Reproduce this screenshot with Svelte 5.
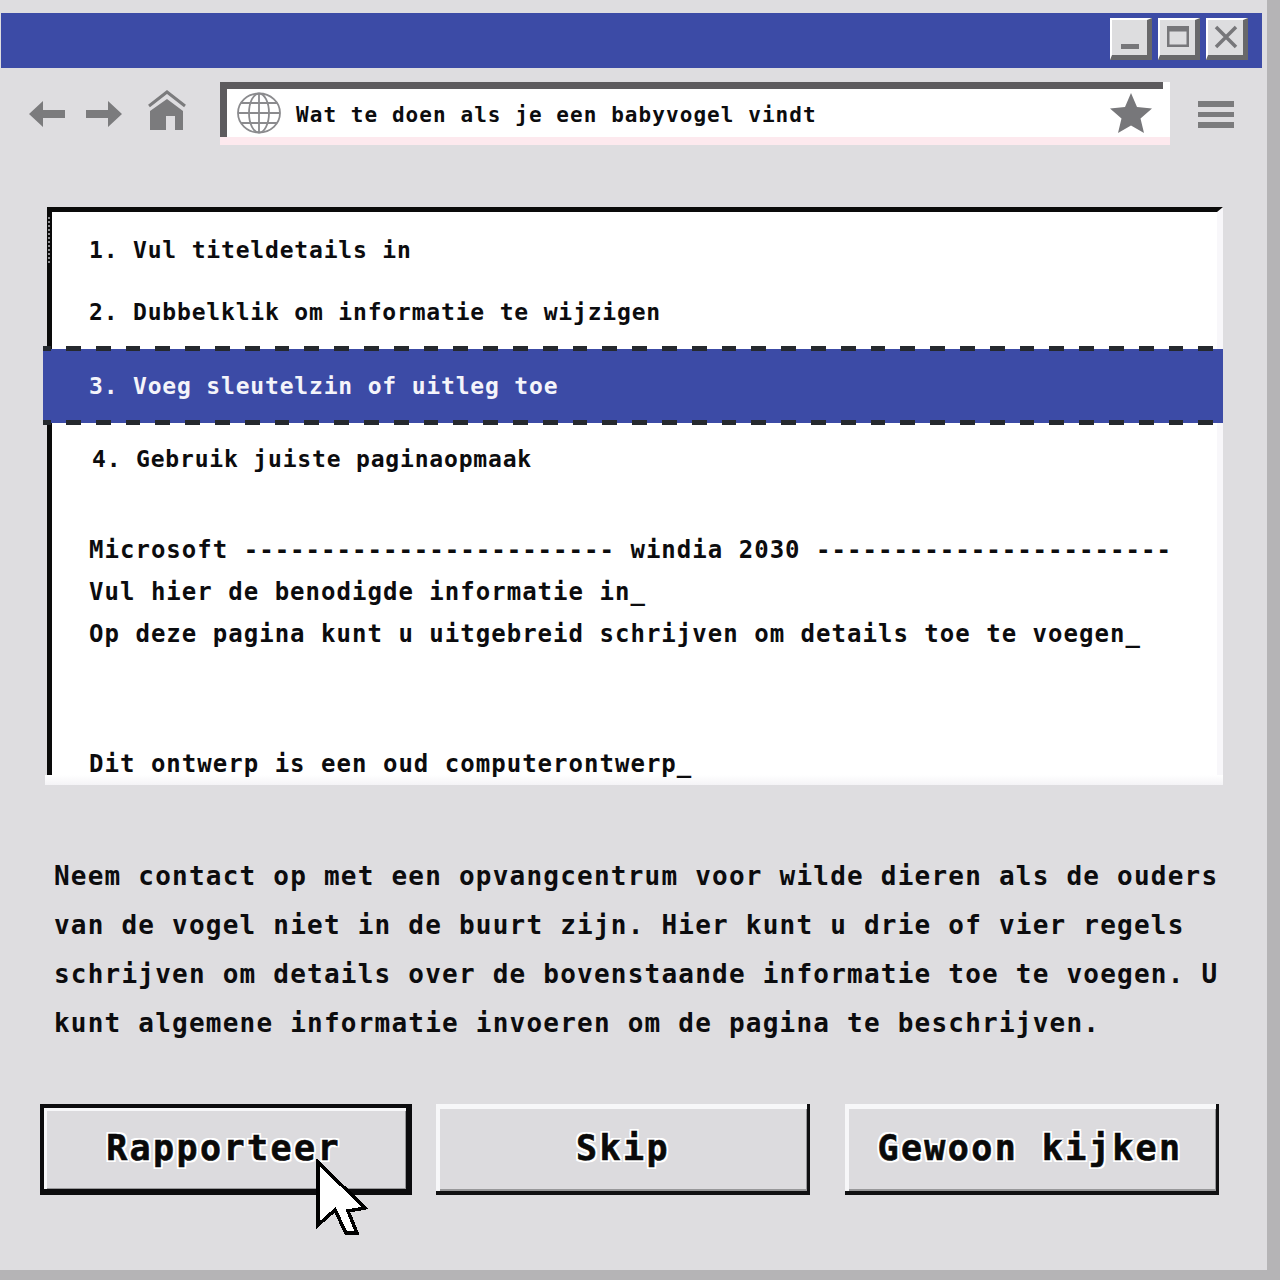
<script>
  const steps = [
    { text: '1. Vul titeldetails in', cls: 'first' },
    { text: '2. Dubbelklik om informatie te wijzigen', cls: 'second' },
    { text: '3. Voeg sleutelzin of uitleg toe', cls: 'active' },
    { text: '4. Gebruik juiste paginaopmaak', cls: 'fourth' }
  ]
  const paragraph = [
    'Neem contact op met een opvangcentrum voor wilde dieren als de ouders',
    'van de vogel niet in de buurt zijn. Hier kunt u drie of vier regels',
    'schrijven om details over de bovenstaande informatie toe te voegen. U',
    'kunt algemene informatie invoeren om de pagina te beschrijven.'
  ]
</script>

<div class="window">
  <header class="titlebar">
    <button class="winbtn" aria-label="Minimaliseren">
      <svg width="28" height="28" viewBox="0 0 28 28"><rect x="5" y="21" width="18" height="5" fill="#77777a" /></svg>
    </button>
    <button class="winbtn" aria-label="Maximaliseren">
      <svg width="28" height="28" viewBox="0 0 28 28"><path d="M3 3h22v21H3z M5.500 8.500v13h17v-13z" fill="#77777a" fill-rule="evenodd" /></svg>
    </button>
    <button class="winbtn" aria-label="Sluiten">
      <svg width="28" height="28" viewBox="0 0 28 28"><path d="M4 4l20 20M24 4L4 24" stroke="#77777a" stroke-width="3.500" fill="none" /></svg>
    </button>
  </header>

  <nav class="toolbar">
    <div class="navicons">
      <svg width="37" height="28" viewBox="0 0 37 28"><path d="M0 14L14 1v9h22v8H14v9z" fill="#7b7b7d" /></svg>
      <svg width="37" height="28" viewBox="0 0 37 28"><path d="M37 14L23 1v9H1v8h22v9z" fill="#7b7b7d" /></svg>
      <svg class="home" width="38" height="41" viewBox="0 0 38 41">
        <path d="M1 16L19 2l18 14" fill="none" stroke="#7b7b7d" stroke-width="3" />
        <path d="M19 9L35 21v19H27V26h-9v14H2V21z" fill="#7b7b7d" />
      </svg>
    </div>
    <div class="address">
      <div class="address-inner">
        <svg class="globe" width="44" height="42" viewBox="0 0 44 42" fill="none" stroke="#8b8b8e" stroke-width="1.800">
          <ellipse cx="22" cy="21" rx="21" ry="19.500" />
          <ellipse cx="22" cy="21" rx="10" ry="19.500" />
          <path d="M22 1.500v39M1 21h42M4 11h36M4 31h36" />
        </svg>
        <span class="url">Wat te doen als je een babyvogel vindt</span>
        <svg class="star" width="44" height="42" viewBox="0 0 44 42"><path d="M22 1l6 14 15 1.500-11.500 10L35 41 22 33.500 9 41l3.500-14.500L1 16.500 16 15z" fill="#77777a" /></svg>
      </div>
    </div>
    <div class="menu" aria-label="Menu"><i></i><i></i><i></i></div>
  </nav>

  <section class="panel">
    {#each steps as step}
      <div class="step {step.cls}">{step.text}</div>
    {/each}
    <div class="line ms">Microsoft ------------------------ windia 2030 -----------------------</div>
    <div class="line fill">Vul hier de benodigde informatie in_</div>
    <div class="line page">Op deze pagina kunt u uitgebreid schrijven om details toe te voegen_</div>
    <div class="line old">Dit ontwerp is een oud computerontwerp_</div>
  </section>

  <p class="body">
    {#each paragraph as row}
      <span>{row}</span>
    {/each}
  </p>

  <div class="actions">
    <button class="action focused">Rapporteer</button>
    <button class="action skip">Skip</button>
    <button class="action watch">Gewoon kijken</button>
    <svg class="pointer" width="52" height="78" viewBox="0 0 52 78" shape-rendering="crispEdges">
      <path d="M2 3V66L19 51 30 74H41L32 52 49 49z" fill="#fff" stroke="#000" stroke-width="3.500" stroke-linejoin="miter" />
    </svg>
  </div>
</div>

<style>
  :global(body) {
    background: #b5b4b6;
  }

  .window {
    width: 1267px;
    height: 1270px;
    background: #dedde0;
    box-sizing: border-box;
    padding-top: 13px;
    font-family: "DejaVu Sans Mono", "Liberation Mono", monospace;
    font-weight: 700;
    color: #0c0c0e;
    overflow: hidden;
  }

  .titlebar {
    margin-left: 1px;
    width: 1261px;
    height: 55px;
    background: #3c4ba6;
    box-sizing: border-box;
    padding: 5px 14px 0 0;
    display: flex;
    justify-content: flex-end;
    align-items: flex-start;
    gap: 6px;
  }

  .winbtn {
    width: 42px;
    height: 42px;
    padding: 0 0 2px;
    box-sizing: border-box;
    background: #dddddf;
    border: solid;
    border-width: 2px 5px 5px 2px;
    border-color: #fff #68686a #68686a #fff;
    display: flex;
    align-items: center;
    justify-content: center;
  }

  .toolbar {
    height: 77px;
    display: flex;
    align-items: flex-start;
    padding-top: 14px;
    box-sizing: border-box;
  }

  .navicons {
    width: 220px;
    box-sizing: border-box;
    padding: 15px 0 0 29px;
    display: flex;
    align-items: center;
    gap: 19px;
  }

  .home {
    margin: -7px 0 0 7px;
  }

  .address {
    width: 950px;
    height: 63px;
    background: #fff;
    padding-right: 7px;
    box-sizing: border-box;
    border-bottom: 8px solid #fde9ee;
  }

  .address-inner {
    height: 55px;
    box-sizing: border-box;
    border-top: 7px solid #5d5b5e;
    border-left: 7px solid #5d5b5e;
    display: flex;
    align-items: center;
    padding-left: 10px;
  }

  .url {
    margin: 4px 0 0 15px;
    font-size: 21px;
    letter-spacing: 1.06px;
    white-space: nowrap;
    flex: 1;
  }

  .star {
    margin: 0 10px 0 0;
  }

  .menu {
    margin: 19px 0 0 28px;
    width: 36px;
    display: flex;
    flex-direction: column;
    gap: 5px;
  }

  .menu i {
    height: 5.500px;
    background: #7b7b7d;
  }

  .panel {
    margin: 62px 0 0 47px;
    width: 1176px;
    height: 578px;
    box-sizing: border-box;
    background: #fff;
    border-top: 5px solid #0a0a0a;
    border-left: 5px solid #0a0a0a;
    border-right: 6px solid #f8f7fa;
    position: relative;
    overflow: visible;
  }

  /* pale lip along the bottom, covers the end of the black left edge */
  .panel::after {
    content: '';
    position: absolute;
    left: -7px;
    right: -6px;
    bottom: 0;
    height: 10px;
    background: linear-gradient(#fff, #f4f3f6);
  }

  /* dotted stretch at the top of the left edge */
  .panel::before {
    content: '';
    position: absolute;
    left: -4px;
    top: 3px;
    width: 2px;
    height: 48px;
    background: repeating-linear-gradient(#0a0a0a 0 2px, #8d8d90 2px 4px);
  }

  .step {
    font-size: 23px;
    letter-spacing: 0.82px;
    padding-left: 37px;
    line-height: 30px;
    white-space: nowrap;
  }

  .first {
    margin-top: 23px;
  }

  .second {
    margin-top: 32px;
  }

  .active {
    margin: 19px -6px 0 -9px;
    padding-left: 46px;
    height: 79px;
    line-height: 80px;
    color: #f4f4fa;
    background:
      repeating-linear-gradient(90deg, #25292e 0 8px, transparent 8px 23px, #25292e 23px 29.8px) 0 0 / 100% 5px no-repeat,
      repeating-linear-gradient(90deg, #25292e 0 8px, transparent 8px 23px, #25292e 23px 29.8px) 0 100% / 100% 5px no-repeat,
      linear-gradient(#3c4ba6, #3c4ba6) 0 3px / 100% 74px no-repeat;
  }

  .fourth {
    margin-top: 19px;
    padding-left: 40px;
  }

  .line {
    font-size: 24px;
    letter-spacing: 1.02px;
    line-height: 30px;
    padding-left: 37px;
    white-space: nowrap;
  }

  .ms {
    margin-top: 61px;
  }

  .fill {
    margin-top: 12px;
  }

  .page {
    margin-top: 12px;
  }

  .old {
    margin-top: 100px;
    position: relative;
    z-index: 1;
  }

  .body {
    margin: 67px 0 0 54px;
    font-size: 26px;
    letter-spacing: 1.22px;
    line-height: 49px;
  }

  .body span {
    display: block;
    white-space: nowrap;
  }

  .actions {
    margin: 56px 0 0 40px;
    display: flex;
    align-items: flex-start;
    position: relative;
  }

  .action {
    width: 374px;
    height: 91px;
    box-sizing: border-box;
    font-family: inherit;
    font-weight: 700;
    font-size: 35px;
    letter-spacing: 2.400px;
    -webkit-text-stroke: 0.6px #0a0a0a;
    color: #0a0a0a;
    background: #dcdbde;
    border: none;
    box-shadow:
      inset -3px -4px 0 #101012,
      inset 4px 5px 0 #f7f7f9,
      inset -4px -6px 0 #98989a;
    padding: 0 0 3px 0;
    text-shadow:
      2px 0 #fff, -2px 0 #fff, 0 2px #fff, 0 -2px #fff,
      2px 2px #fff, -2px 2px #fff, 2px -2px #fff, -2px -2px #fff;
  }

  .focused {
    width: 372px;
    border: 4px solid #0c0c0e;
    border-bottom-width: 6px;
    border-right-width: 6px;
    box-shadow: inset 3px 3px 0 #f7f7f9, inset -1px -1px 0 #98989a;
    padding: 0 3px 1px 0;
  }

  .skip {
    margin-left: 24px;
  }

  .watch {
    margin-left: 35px;
    padding-right: 4px;
  }

  .pointer {
    position: absolute;
    left: 276px;
    top: 55px;
  }
</style>
